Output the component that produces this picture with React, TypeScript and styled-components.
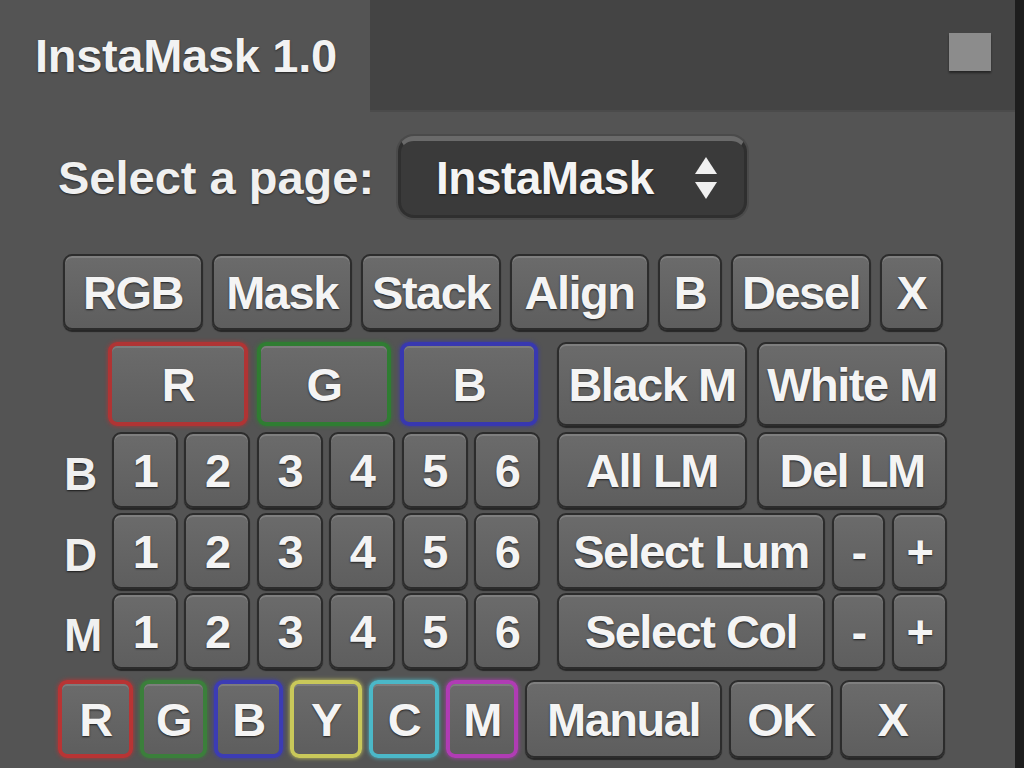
import React from "react";
import styled, { createGlobalStyle } from "styled-components";

const GlobalStyle = createGlobalStyle`
  html, body {
    margin: 0;
    padding: 0;
    background: #535353;
    overflow: hidden;
  }
  body {
    font-family: "Liberation Sans", Arial, sans-serif;
  }
`;

const Frame = styled.div`
  display: flex;
  width: 1024px;
  height: 768px;
  background: #545454;
`;

const Panel = styled.div`
  flex: 1;
  display: flex;
  flex-direction: column;
`;

const RightEdge = styled.div`
  width: 9px;
  background: #1d1d1d;
`;

const Header = styled.div`
  display: flex;
  height: 112px;
`;

const Tab = styled.div`
  width: 370px;
  display: flex;
  align-items: center;
  padding-left: 35px;
  padding-bottom: 2px;
  box-sizing: border-box;
  font-size: 47px;
  font-weight: 700;
  letter-spacing: -0.3px;
  color: #f2f2f2;
  text-shadow: 0 1px 2px rgba(0, 0, 0, 0.6);
`;

const HeaderFill = styled.div`
  flex: 1;
  display: flex;
  justify-content: flex-end;
  align-items: flex-start;
  padding: 33px 24px 0 0;
  background: #444444;
  border-bottom: 2px solid #4b4b4b;
`;

const CloseSquare = styled.div`
  width: 42px;
  height: 38px;
  background: #8c8c8c;
  box-shadow: 0 2px 2px rgba(0, 0, 0, 0.45);
`;

const Body = styled.div`
  display: flex;
  flex-direction: column;
  padding-left: 58px;
`;

const PageRow = styled.div`
  display: flex;
  align-items: center;
  height: 84px;
  margin-top: 23px;
`;

const PageLabel = styled.div`
  font-size: 47px;
  font-weight: 700;
  color: #f0f0f0;
  text-shadow: 0 1px 2px rgba(0, 0, 0, 0.6);
  width: 340px;
`;

const Dropdown = styled.div`
  width: 349px;
  height: 82px;
  box-sizing: border-box;
  display: flex;
  align-items: center;
  justify-content: space-between;
  padding: 0 24px 0 35px;
  background: #3a3a3a;
  border: 3px solid #2f2f2f;
  border-top: 5px solid #6a6a6a;
  border-radius: 16px;
  box-shadow: 0 0 0 2px #4a4a4a;
  font-size: 46px;
  font-weight: 700;
  color: #f4f4f4;
  letter-spacing: -0.5px;
  text-shadow: 0 1px 2px rgba(0, 0, 0, 0.7);
`;

const Row = styled.div<{ $mt: number; $h: number; $pl?: number; $gap?: number }>`
  display: flex;
  align-items: stretch;
  margin-top: ${(p) => p.$mt}px;
  height: ${(p) => p.$h}px;
  padding-left: ${(p) => p.$pl ?? 0}px;
  gap: ${(p) => p.$gap ?? 0}px;
`;

const RowLabel = styled.div<{ $w: number }>`
  width: ${(p) => p.$w}px;
  flex-shrink: 0;
  display: flex;
  align-items: center;
  padding-left: 6px;
  padding-top: 8px;
  box-sizing: border-box;
  font-size: 46px;
  font-weight: 700;
  letter-spacing: -1px;
  color: #f0f0f0;
  text-shadow: 0 1px 2px rgba(0, 0, 0, 0.7);
`;

const Group = styled.div<{ $w?: number; $gap: number; $ml?: number }>`
  display: flex;
  gap: ${(p) => p.$gap}px;
  width: ${(p) => (p.$w ? `${p.$w}px` : "auto")};
  margin-left: ${(p) => p.$ml ?? 0}px;
`;

const Btn = styled.div<{ $w: number; $ring?: string }>`
  width: ${(p) => p.$w}px;
  flex-shrink: 0;
  box-sizing: border-box;
  display: flex;
  align-items: center;
  justify-content: center;
  background: linear-gradient(#6b6b6b, #5e5e5e);
  border: ${(p) => (p.$ring ? `4px solid ${p.$ring}` : "2px solid #2c2c2c")};
  border-radius: 9px;
  box-shadow: ${(p) =>
    p.$ring
      ? `0 0 4px ${p.$ring}, inset 0 2px 0 rgba(255,255,255,0.12)`
      : "inset 0 2px 0 rgba(255,255,255,0.14), 0 2px 1px rgba(0,0,0,0.55)"};
  font-size: 47px;
  font-weight: 700;
  letter-spacing: -1.5px;
  color: #f4f4f4;
  text-shadow: 0 1px 2px rgba(0, 0, 0, 0.7);
  white-space: nowrap;
  overflow: hidden;
`;

const Arrows = () => (
  <svg width="28" height="46" viewBox="0 0 28 46">
    <path d="M14 2 L25 19 L3 19 Z" fill="#f0f0f0" />
    <path d="M14 44 L25 27 L3 27 Z" fill="#f0f0f0" />
  </svg>
);

const numbers = ["1", "2", "3", "4", "5", "6"];

const NumberGroup = () => (
  <Group $gap={6.4} $w={428}>
    {numbers.map((n) => (
      <Btn key={n} $w={66}>
        {n}
      </Btn>
    ))}
  </Group>
);

const colorSwatches = [
  { t: "R", c: "#b83434", w: 75 },
  { t: "G", c: "#3b7f3b", w: 67 },
  { t: "B", c: "#3c3cb4", w: 69 },
  { t: "Y", c: "#c9c85a", w: 72 },
  { t: "C", c: "#4bb8c8", w: 70 },
  { t: "M", c: "#b03cb4", w: 72 },
];

export default function App() {
  return (
    <>
      <GlobalStyle />
      <Frame>
        <Panel>
          <Header>
            <Tab>InstaMask 1.0</Tab>
            <HeaderFill>
              <CloseSquare />
            </HeaderFill>
          </Header>
          <Body>
            <PageRow>
              <PageLabel>Select a page:</PageLabel>
              <Dropdown>
                <span>InstaMask</span>
                <Arrows />
              </Dropdown>
            </PageRow>

            <Row $mt={35} $h={76} $pl={5} $gap={9}>
              <Btn $w={140}>RGB</Btn>
              <Btn $w={140}>Mask</Btn>
              <Btn $w={140}>Stack</Btn>
              <Btn $w={139}>Align</Btn>
              <Btn $w={64}>B</Btn>
              <Btn $w={140}>Desel</Btn>
              <Btn $w={63}>X</Btn>
            </Row>

            <Row $mt={12} $h={84}>
              <RowLabel $w={50} />
              <Group $gap={9} $w={432}>
                <Btn $w={140} $ring="#b03434">R</Btn>
                <Btn $w={134} $ring="#2f7d32">G</Btn>
                <Btn $w={138} $ring="#3838b0">B</Btn>
              </Group>
              <Group $gap={10} $ml={17}>
                <Btn $w={190}>Black M</Btn>
                <Btn $w={190}>White M</Btn>
              </Group>
            </Row>

            <Row $mt={6} $h={76}>
              <RowLabel $w={54}>B</RowLabel>
              <NumberGroup />
              <Group $gap={10} $ml={17}>
                <Btn $w={190}>All LM</Btn>
                <Btn $w={190}>Del LM</Btn>
              </Group>
            </Row>

            <Row $mt={5} $h={76}>
              <RowLabel $w={54}>D</RowLabel>
              <NumberGroup />
              <Group $gap={7} $ml={17}>
                <Btn $w={268}>Select Lum</Btn>
                <Btn $w={53}>-</Btn>
                <Btn $w={55}>+</Btn>
              </Group>
            </Row>

            <Row $mt={4} $h={76}>
              <RowLabel $w={54}>M</RowLabel>
              <NumberGroup />
              <Group $gap={7} $ml={17}>
                <Btn $w={268}>Select Col</Btn>
                <Btn $w={53}>-</Btn>
                <Btn $w={55}>+</Btn>
              </Group>
            </Row>

            <Row $mt={11} $h={78} $gap={7}>
              {colorSwatches.map((s) => (
                <Btn key={s.t} $w={s.w} $ring={s.c}>
                  {s.t}
                </Btn>
              ))}
              <Btn $w={197}>Manual</Btn>
              <Btn $w={104}>OK</Btn>
              <Btn $w={105}>X</Btn>
            </Row>
          </Body>
        </Panel>
        <RightEdge />
      </Frame>
    </>
  );
}
